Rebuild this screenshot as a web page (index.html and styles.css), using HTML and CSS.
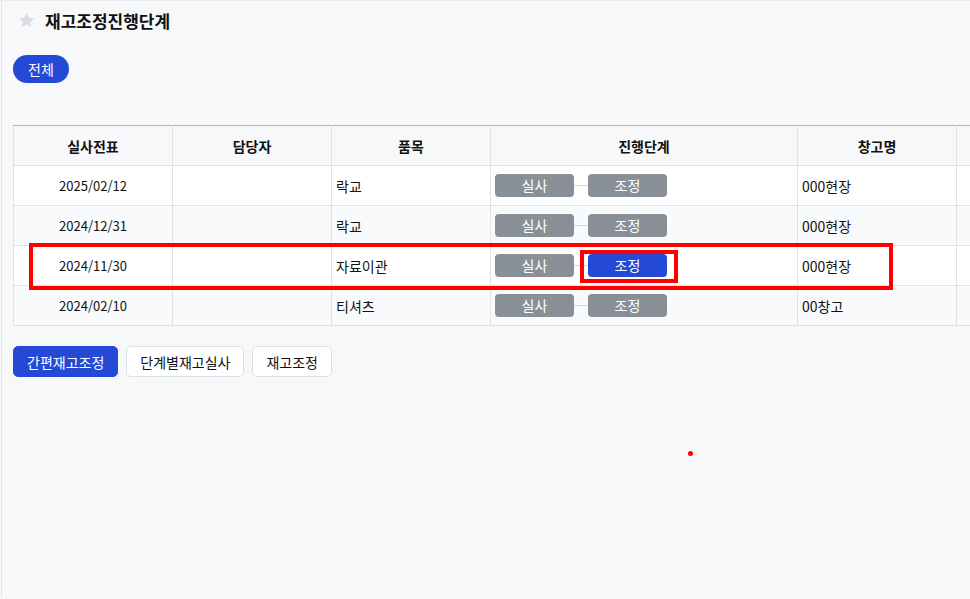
FILE: index.html
```html
<!DOCTYPE html>
<html lang="ko">
<head>
<meta charset="utf-8">
<link rel="stylesheet" href="styles.css">
</head>
<body>
<div class="page">
  <div class="title-bar">
    <svg class="star" width="17" height="17" viewBox="0 0 24 24"><path d="M12 1.2l3.3 7 7.5.8-5.6 5.1 1.6 7.5L12 17.8l-6.8 3.8 1.6-7.5-5.6-5.1 7.5-.8z" fill="#d9dce3"/></svg>
    <h1 class="title">재고조정진행단계</h1>
  </div>
  <div class="filters">
    <button class="pill">전체</button>
  </div>
  <div class="table-wrap">
    <table class="grid">
      <colgroup>
        <col class="c1"><col class="c1"><col class="c1"><col class="c2"><col class="c1"><col class="c3">
      </colgroup>
      <thead>
        <tr><th>실사전표</th><th>담당자</th><th>품목</th><th>진행단계</th><th>창고명</th><th></th></tr>
      </thead>
      <tbody>
        <tr>
          <td class="center">2025/02/12</td><td></td><td class="left">락교</td>
          <td class="stages"><div class="steps"><span class="step">실사</span><span class="link"></span><span class="step">조정</span></div></td>
          <td class="left">000현장</td><td></td>
        </tr>
        <tr class="alt">
          <td class="center">2024/12/31</td><td></td><td class="left">락교</td>
          <td class="stages"><div class="steps"><span class="step">실사</span><span class="link"></span><span class="step">조정</span></div></td>
          <td class="left">000현장</td><td></td>
        </tr>
        <tr>
          <td class="center">2024/11/30</td><td></td><td class="left">자료이관</td>
          <td class="stages"><div class="steps"><span class="step">실사</span><span class="link"></span><span class="step active">조정</span></div></td>
          <td class="left">000현장</td><td></td>
        </tr>
        <tr class="alt">
          <td class="center">2024/02/10</td><td></td><td class="left">티셔츠</td>
          <td class="stages"><div class="steps"><span class="step">실사</span><span class="link"></span><span class="step">조정</span></div></td>
          <td class="left">00창고</td><td></td>
        </tr>
      </tbody>
    </table>
  </div>
  <div class="actions">
    <button class="btn primary">간편재고조정</button>
    <button class="btn">단계별재고실사</button>
    <button class="btn">재고조정</button>
  </div>
</div>
<div class="mark mark-row"></div>
<div class="mark mark-cell"></div>
<div class="dot"></div>
</body>
</html>
```
FILE: styles.css
```css
html, body {
  margin: 0;
  padding: 0;
  background: #f7f8fa;
  overflow: hidden;
  height: 599px;
  font-family: "Noto Sans CJK KR", "Noto Sans", sans-serif;
  color: #111;
}
.page {
  margin-left: 1px;
  border-left: 1px solid #e3e4e8;
  border-top: 1px solid #ebecef;
  padding-left: 11px;
  height: 598px;
  box-sizing: border-box;
}
.title-bar {
  display: flex;
  align-items: center;
  gap: 10px;
  height: 39px;
  padding-left: 5px;
}
.star { display: block; }
.title {
  margin: 0;
  font-size: 17px;
  font-weight: 700;
  line-height: 1;
  color: #111;
}
.filters {
  margin-top: 15px;
  display: flex;
}
.pill {
  height: 28px;
  padding: 0 15px;
  border: none;
  border-radius: 14px;
  background: #2349d6;
  color: #fff;
  font-family: inherit;
  font-size: 14px;
  line-height: 28px;
}
.table-wrap {
  margin-top: 42px;
  width: 1200px;
}
.grid {
  border-collapse: collapse;
  table-layout: fixed;
  width: 1102px;
  font-size: 14px;
}
.c1 { width: 159px; }
.c2 { width: 307px; }
.c3 { width: 159px; }
.grid th {
  height: 39px;
  background: #f7f8fa;
  font-weight: 700;
  font-size: 14px;
  border: 1px solid #dfe2e6;
  border-top: 1px solid #a9b7c9;
  padding: 0;
  text-align: center;
}
.grid td {
  height: 39px;
  border: 1px solid #dfe2e6;
  padding: 0;
  background: #fff;
  font-size: 14px;
}
.grid tr.alt td { background: #f9fafb; }
.grid td.center { text-align: center; font-size: 13px; }
.grid td.left { padding-left: 4px; }
.grid td.stages { padding-left: 4px; }
.steps {
  display: flex;
  align-items: center;
}
.step {
  width: 79px;
  height: 23px;
  border-radius: 4px;
  background: #898f96;
  color: #fff;
  font-size: 14px;
  line-height: 23px;
  text-align: center;
}
.step.active { background: #2349d6; }
.link {
  width: 14px;
  height: 1px;
  background: #d3d6db;
}
.actions {
  margin-top: 20px;
  display: flex;
  gap: 8px;
}
.btn {
  height: 31px;
  padding: 0 13px;
  border: 1px solid #dde0e5;
  border-radius: 5px;
  background: #fff;
  color: #111;
  font-family: inherit;
  font-size: 14px;
}
.btn.primary {
  background: #2349d6;
  border-color: #2349d6;
  color: #fff;
}
.mark {
  position: absolute;
  border: 4px solid #ff0000;
  box-sizing: border-box;
}
.mark-row { left: 29px; top: 243px; width: 864px; height: 47px; }
.mark-cell { left: 580px; top: 250px; width: 98px; height: 33px; }
.dot {
  position: absolute;
  left: 688px;
  top: 451px;
  width: 5px;
  height: 5px;
  border-radius: 50%;
  background: #ff0000;
}
```
